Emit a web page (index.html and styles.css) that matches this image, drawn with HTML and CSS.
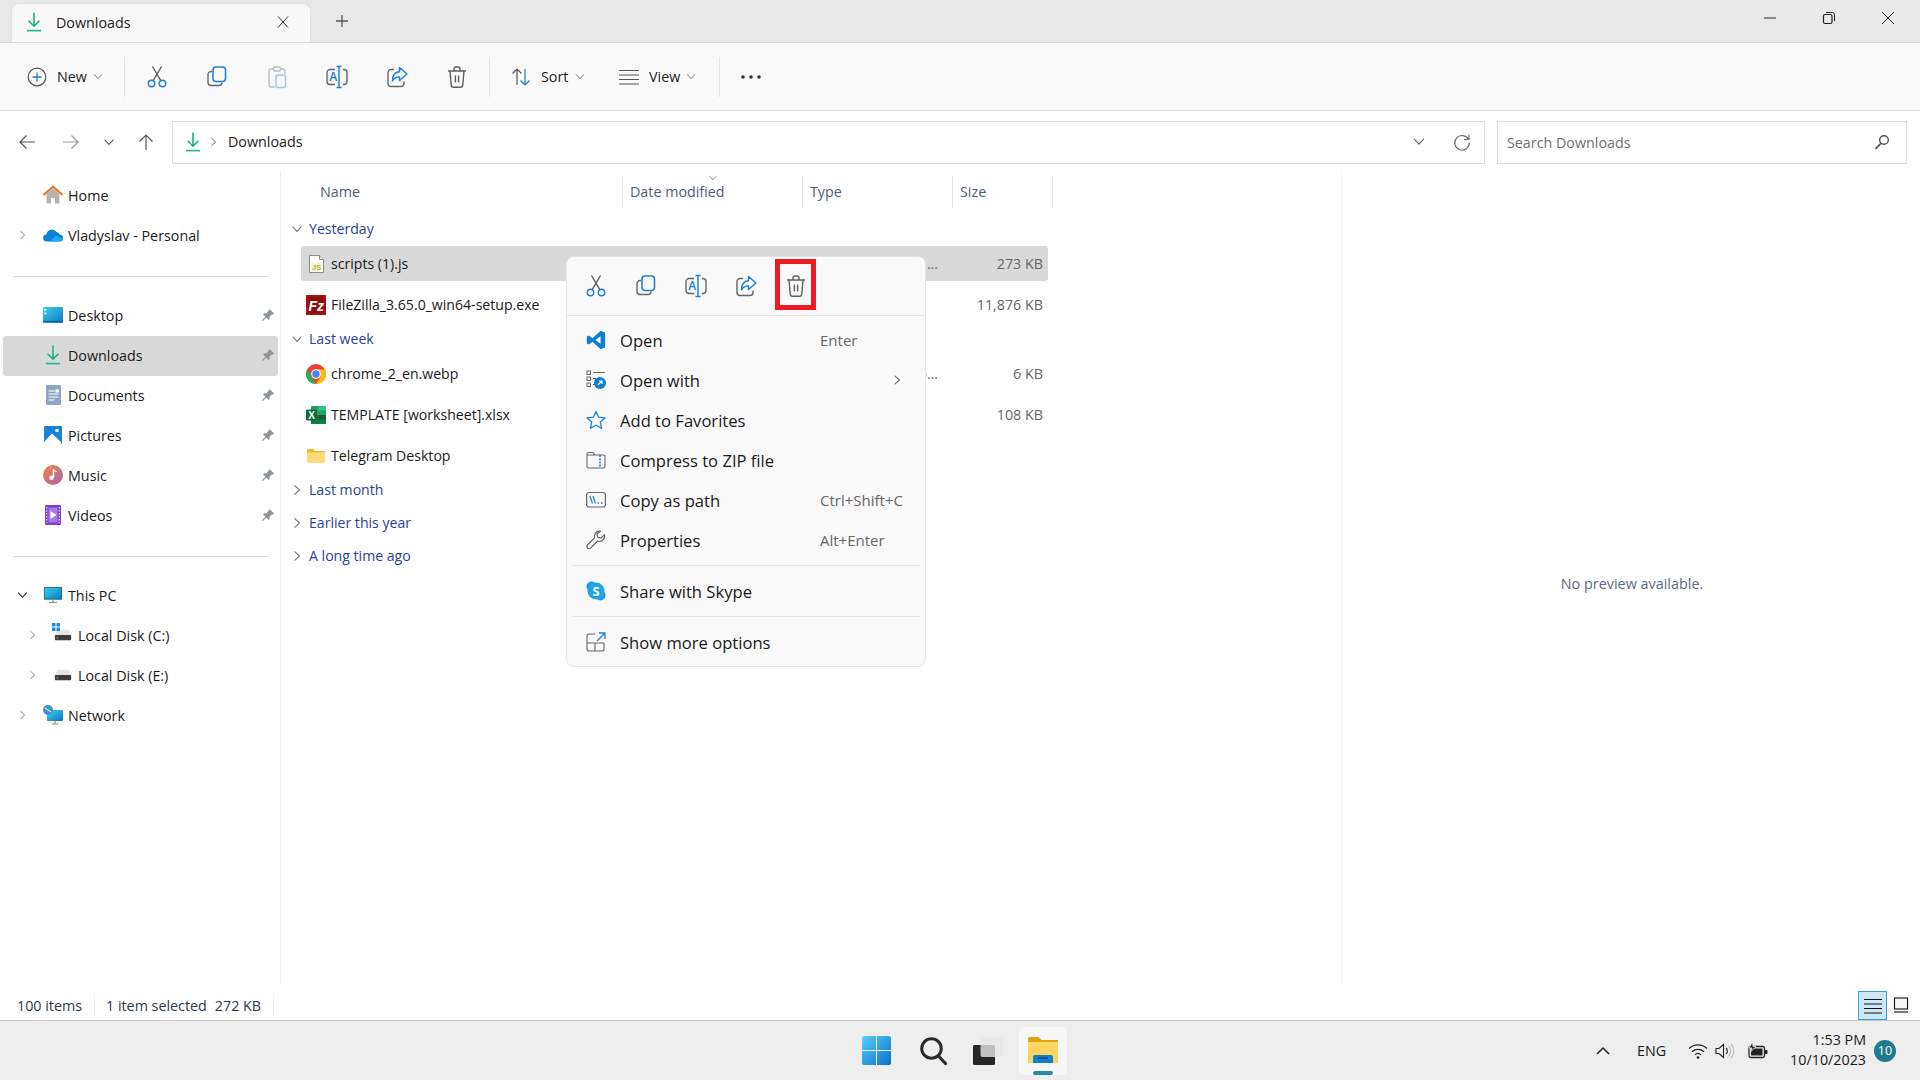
FILE: index.html
```html
<!DOCTYPE html>
<html lang="en">
<head>
    <meta charset="UTF-8">
    <title>Downloads - File Explorer</title>
    <link rel="stylesheet" href="styles.css">
</head>
<body>
    <!-- shared icons -->
    <svg class="sprite" width="0" height="0">
        <defs>
            <linearGradient id="gradSky" x1="0" y1="0" x2="1" y2="1"><stop offset="0" stop-color="#3fd0f0"/><stop offset="1" stop-color="#0b78c2"/></linearGradient>
            <linearGradient id="gradMusic" x1="0" y1="0" x2="1" y2="1"><stop offset="0" stop-color="#f08a3c"/><stop offset="1" stop-color="#a85fb0"/></linearGradient>
            <linearGradient id="gradWin" x1="0" y1="0" x2="1" y2="1"><stop offset="0" stop-color="#5ad0fb"/><stop offset="1" stop-color="#0670cc"/></linearGradient>
            <symbol id="i-dl" viewBox="0 0 14 20"><path d="M7 0.500V14M1.600 8.800L7 14.200l5.400-5.400" fill="none" stroke="#14b37d" stroke-width="1.600"/><path d="M0 18.600h14" stroke="#22b8a0" stroke-width="1.700"/></symbol>
            <symbol id="i-cut" viewBox="0 0 24 24"><path d="M7.500 1.500l8.300 14.200M16.500 1.500L8.200 15.700" fill="none" stroke="#5a5a5a" stroke-width="1.300"/><circle cx="6.500" cy="18.500" r="3.200" fill="none" stroke="#1a7fd8" stroke-width="1.400"/><circle cx="17.500" cy="18.500" r="3.200" fill="none" stroke="#1a7fd8" stroke-width="1.400"/></symbol>
            <symbol id="i-copy" viewBox="0 0 24 24"><path d="M7 6.500H6a3 3 0 0 0-3 3v8a3 3 0 0 0 3 3h8a3 3 0 0 0 3-3" fill="none" stroke="#666" stroke-width="1.400"/><rect x="8" y="2" width="12.500" height="14.500" rx="3" fill="none" stroke="#1a7fd8" stroke-width="1.500"/></symbol>
            <symbol id="i-paste" viewBox="0 0 24 24"><path d="M8 4H6a2 2 0 0 0-2 2v14a2 2 0 0 0 2 2h4M16 4h2a2 2 0 0 1 2 2v3" fill="none" stroke="#666" stroke-width="1.400"/><rect x="8.500" y="2" width="7" height="4" rx="1.500" fill="none" stroke="#666" stroke-width="1.400"/><rect x="11" y="10" width="9.500" height="12.500" rx="2" fill="none" stroke="#1a7fd8" stroke-width="1.400"/></symbol>
            <symbol id="i-rename" viewBox="0 0 24 24"><path d="M10 4.500H5a3 3 0 0 0-3 3v9a3 3 0 0 0 3 3h5M18 4.500h1a3 3 0 0 1 3 3v9a3 3 0 0 1-3 3h-1" fill="none" stroke="#666" stroke-width="1.400"/><path d="M11.500 1.500h5M14 1.500v21M11.500 22.500h5" fill="none" stroke="#1a7fd8" stroke-width="1.400"/><text x="4.200" y="16" class="icon-letter">A</text></symbol>
            <symbol id="i-share" viewBox="0 0 24 24"><path d="M9 4.500H6a3 3 0 0 0-3 3v11a3 3 0 0 0 3 3h10a3 3 0 0 0 3-3v-2" fill="none" stroke="#666" stroke-width="1.400"/><path d="M14.500 2.500l7.500 6.500-7.500 6.500v-3.600c-3.400 0-5.600 1.400-7 4 0-5.400 2.600-9 7-9.200z" fill="none" stroke="#1a7fd8" stroke-width="1.400" stroke-linejoin="round"/></symbol>
            <symbol id="i-trash" viewBox="0 0 24 24"><path d="M3 6h18M9 5.500V4a2 2 0 0 1 2-2h2a2 2 0 0 1 2 2v1.500M5 6l1.200 14a2.400 2.400 0 0 0 2.400 2.200h6.800a2.400 2.400 0 0 0 2.400-2.200L19 6M10.400 10.500v7M13.600 10.500v7" fill="none" stroke="#5f5f5f" stroke-width="1.400"/></symbol>
            <symbol id="i-pin" viewBox="0 0 16 16"><path d="M9.600 1l5.400 5.400-1.500.9-1 0-2.600 2.600-.3 2.800-1 1L5.900 11 1.800 15l-.8-.8L5 10.100 2.300 7.400l1-1 2.800-.3 2.600-2.600 0-1z" fill="#8d9499"/></symbol>
            <symbol id="i-right" viewBox="0 0 10 14"><path d="M2 1.500l6 5.500-6 5.500" fill="none" stroke="currentColor" stroke-width="1.300"/></symbol>
            <symbol id="i-down" viewBox="0 0 14 10"><path d="M1.500 2l5.500 6 5.500-6" fill="none" stroke="currentColor" stroke-width="1.300"/></symbol>
            <symbol id="i-disk" viewBox="0 0 20 14"><path d="M3.500 1h13L19.500 7h-19z" fill="#e4e4e4"/><rect x="0.500" y="7" width="19" height="6" rx="1" fill="#3c3c3c"/><rect x="2.500" y="9.500" width="2" height="1.500" fill="#46d04a"/></symbol>
        </defs>
    </svg>

    <div class="window">
        <!-- tabs -->
        <div class="tabbar">
            <div class="tab">
                <svg class="tab-icon" width="14" height="20"><use href="#i-dl"/></svg>
                <span>Downloads</span>
                <svg class="tab-close" width="14" height="14" viewBox="0 0 14 14"><path d="M2 1.500l10 11M12 1.500l-10 11" stroke="#333" stroke-width="1"/></svg>
            </div>
            <div class="tab-add">
                <svg width="14" height="14" viewBox="0 0 14 14"><path d="M7 1v12M1 7h12" stroke="#555" stroke-width="1.300"/></svg>
            </div>
            <div class="win-controls">
                <div class="win-btn"><svg width="14" height="14" viewBox="0 0 14 14"><path d="M1 7h12" stroke="#222" stroke-width="1"/></svg></div>
                <div class="win-btn"><svg width="14" height="14" viewBox="0 0 14 14"><rect x="1.500" y="3.500" width="8.500" height="9" rx="1.500" fill="none" stroke="#222" stroke-width="1.200"/><path d="M4 1.500h6.500a2 2 0 0 1 2 2V10" fill="none" stroke="#222" stroke-width="1"/></svg></div>
                <div class="win-btn"><svg width="14" height="14" viewBox="0 0 14 14"><path d="M1 1l12 12M13 1L1 13" stroke="#222" stroke-width="1"/></svg></div>
            </div>
        </div>

        <!-- command bar -->
        <div class="toolbar">
            <div class="tool-text tool-new">
                <svg width="20" height="20" viewBox="0 0 20 20"><circle cx="10" cy="10" r="8.800" fill="none" stroke="#555" stroke-width="1.200"/><path d="M10 5.500v9M5.500 10h9" stroke="#1a7fd8" stroke-width="1.300"/></svg>
                <span>New</span>
                <svg class="caret" width="10" height="7"><use href="#i-down"/></svg>
            </div>
            <div class="tool-sep"></div>
            <div class="tool"><svg width="24" height="24"><use href="#i-cut"/></svg></div>
            <div class="tool"><svg width="24" height="24"><use href="#i-copy"/></svg></div>
            <div class="tool disabled"><svg width="24" height="24"><use href="#i-paste"/></svg></div>
            <div class="tool"><svg width="24" height="24"><use href="#i-rename"/></svg></div>
            <div class="tool"><svg width="24" height="24"><use href="#i-share"/></svg></div>
            <div class="tool"><svg width="24" height="24"><use href="#i-trash"/></svg></div>
            <div class="tool-sep"></div>
            <div class="tool-text tool-sort">
                <svg width="20" height="20" viewBox="0 0 20 20"><path d="M6 18V2M1.500 6.500L6 2l4.500 4.500" fill="none" stroke="#555" stroke-width="1.200"/><path d="M14 2v16M9.500 13.500L14 18l4.500-4.500" fill="none" stroke="#1a7fd8" stroke-width="1.200"/></svg>
                <span>Sort</span>
                <svg class="caret" width="10" height="7"><use href="#i-down"/></svg>
            </div>
            <div class="tool-text tool-view">
                <svg width="20" height="20" viewBox="0 0 20 20"><path d="M0 3.500h20M0 8h20M0 12.500h20M0 17h20" stroke="#555" stroke-width="1.200"/></svg>
                <span>View</span>
                <svg class="caret" width="10" height="7"><use href="#i-down"/></svg>
            </div>
            <div class="tool-sep tool-sep-last"></div>
            <div class="tool"><svg width="22" height="6" viewBox="0 0 22 6"><circle cx="3" cy="3" r="1.800" fill="#333"/><circle cx="11" cy="3" r="1.800" fill="#333"/><circle cx="19" cy="3" r="1.800" fill="#333"/></svg></div>
        </div>

        <!-- address row -->
        <div class="address-row">
            <div class="nav-btn nav-w44"><svg width="18" height="18" viewBox="0 0 18 18"><path d="M17 9H2M8.500 2.500L2 9l6.500 6.500" fill="none" stroke="#555" stroke-width="1.200"/></svg></div>
            <div class="nav-btn nav-w44 nav-off"><svg width="18" height="18" viewBox="0 0 18 18"><path d="M1 9h15M9.500 2.500L16 9l-6.500 6.500" fill="none" stroke="#999" stroke-width="1.200"/></svg></div>
            <div class="nav-btn nav-w32"><svg width="12" height="8"><use href="#i-down"/></svg></div>
            <div class="nav-btn nav-w42"><svg width="18" height="18" viewBox="0 0 18 18"><path d="M9 17V2M2.500 8.500L9 2l6.500 6.500" fill="none" stroke="#555" stroke-width="1.200"/></svg></div>
            <div class="address-box">
                <svg width="14" height="20"><use href="#i-dl"/></svg>
                <svg class="crumb-sep" width="7" height="10"><use href="#i-right"/></svg>
                <span>Downloads</span>
                <svg class="address-drop" width="14" height="9"><use href="#i-down"/></svg>
                <svg class="address-refresh" width="18" height="18" viewBox="0 0 18 18"><path d="M15.500 6.500A7.300 7.300 0 1 0 16.300 9.500M16 1.500v5h-5" fill="none" stroke="#666" stroke-width="1.100"/></svg>
            </div>
            <div class="search-box">
                <span>Search Downloads</span>
                <svg width="16" height="16" viewBox="0 0 16 16"><circle cx="10" cy="6" r="4.300" fill="none" stroke="#555" stroke-width="1.400"/><path d="M7 9.300L1.500 14.800" stroke="#555" stroke-width="1.800"/></svg>
            </div>
        </div>

        <div class="main">
            <!-- navigation pane -->
            <nav class="sidebar">
                <div class="nav-row">
                    <span class="chev"></span>
                    <span class="nav-icon"><svg width="20" height="20" viewBox="0 0 20 20"><path d="M3.500 9v9.500h4.500V13h4v5.500h4.500V9L10 3z" fill="#b3b3b3"/><path d="M0.500 10L10 1.500 19.500 10" fill="none" stroke="#e8751a" stroke-width="2"/></svg></span>
                    <span>Home</span>
                </div>
                <div class="nav-row">
                    <span class="chev"><svg width="7" height="10"><use href="#i-right"/></svg></span>
                    <span class="nav-icon"><svg width="20" height="14" viewBox="0 0 20 14"><path d="M4 13.500a3.500 3.500 0 0 1-.6-7A5.500 5.500 0 0 1 13.500 4a4 4 0 0 1 3 2.500 3.500 3.500 0 0 1 0 7z" fill="#0f7fdc"/><path d="M7 13.500L13 7.500l6.500 3a3.500 3.500 0 0 1-3 3z" fill="#27a7ec"/></svg></span>
                    <span>Vladyslav - Personal</span>
                </div>
                <div class="nav-sep"></div>
                <div class="nav-row">
                    <span class="chev"></span>
                    <span class="nav-icon"><svg width="20" height="16" viewBox="0 0 20 16"><rect width="20" height="16" rx="1" fill="url(#gradSky)"/><rect x="1.500" y="2" width="1.800" height="1.800" fill="#fff"/><rect x="1.500" y="5.500" width="1.800" height="1.800" fill="#fff"/><path d="M0 14.500h20" stroke="#0a5f9c" stroke-width="1.200"/></svg></span>
                    <span>Desktop</span>
                    <svg class="pin" width="14" height="14"><use href="#i-pin"/></svg>
                </div>
                <div class="nav-row active">
                    <span class="chev"></span>
                    <span class="nav-icon"><svg width="14" height="20"><use href="#i-dl"/></svg></span>
                    <span>Downloads</span>
                    <svg class="pin" width="14" height="14"><use href="#i-pin"/></svg>
                </div>
                <div class="nav-row">
                    <span class="chev"></span>
                    <span class="nav-icon"><svg width="15" height="20" viewBox="0 0 15 20"><rect width="15" height="20" rx="1" fill="#8ea6c4"/><path d="M2.500 6h6M2.500 9h10M2.500 12h10M2.500 15h6" stroke="#fff" stroke-width="1"/><rect x="9.500" y="4.500" width="3.500" height="3" fill="#fff"/></svg></span>
                    <span>Documents</span>
                    <svg class="pin" width="14" height="14"><use href="#i-pin"/></svg>
                </div>
                <div class="nav-row">
                    <span class="chev"></span>
                    <span class="nav-icon"><svg width="18" height="18" viewBox="0 0 18 18"><rect width="18" height="18" rx="1" fill="#1882d8"/><path d="M0 16L8 7.500l9 8.500v2H0z" fill="#fff"/><circle cx="13" cy="4.500" r="1.800" fill="#fff"/></svg></span>
                    <span>Pictures</span>
                    <svg class="pin" width="14" height="14"><use href="#i-pin"/></svg>
                </div>
                <div class="nav-row">
                    <span class="chev"></span>
                    <span class="nav-icon"><svg width="20" height="20" viewBox="0 0 20 20"><circle cx="10" cy="10" r="10" fill="url(#gradMusic)"/><path d="M10.500 4.500v8" stroke="#fff" stroke-width="1.500"/><path d="M10.500 4.500c1 1.500 2.500 1.500 3 2.500" fill="none" stroke="#fff" stroke-width="1.200"/><circle cx="8.500" cy="12.800" r="2.200" fill="#fff"/></svg></span>
                    <span>Music</span>
                    <svg class="pin" width="14" height="14"><use href="#i-pin"/></svg>
                </div>
                <div class="nav-row">
                    <span class="chev"></span>
                    <span class="nav-icon"><svg width="16" height="20" viewBox="0 0 16 20"><rect width="16" height="20" rx="1" fill="#7b3fd0"/><rect x="3.500" y="2.500" width="9" height="15" fill="#a67ae8"/><path d="M5.500 6l6 4-6 4z" fill="#fff"/><path d="M1.700 2v16M14.300 2v16" stroke="#e6d8fa" stroke-width="1.300" stroke-dasharray="1.500 1.500"/></svg></span>
                    <span>Videos</span>
                    <svg class="pin" width="14" height="14"><use href="#i-pin"/></svg>
                </div>
                <div class="nav-sep"></div>
                <div class="nav-row">
                    <span class="chev chev-dark"><svg width="11" height="8"><use href="#i-down"/></svg></span>
                    <span class="nav-icon"><svg width="18" height="16" viewBox="0 0 18 16"><rect width="18" height="12.500" rx="0.800" fill="url(#gradSky)"/><rect x="0.400" y="0.400" width="17.200" height="11.700" fill="none" stroke="#0a6a8c" stroke-width="0.800"/><path d="M9 12.500V15M5 15.500h8" stroke="#8a8a8a" stroke-width="1.200"/></svg></span>
                    <span>This PC</span>
                </div>
                <div class="nav-row indent">
                    <span class="chev"><svg width="7" height="10"><use href="#i-right"/></svg></span>
                    <span class="nav-icon nav-icon-disk">
                        <svg class="disk-flag" width="8" height="8" viewBox="0 0 8 8"><path d="M0 0h3.500v3.500H0zM4.500 0H8v3.500H4.500zM0 4.500h3.500V8H0zM4.500 4.500H8V8H4.500z" fill="#1a8ae0"/></svg>
                        <svg width="18" height="12"><use href="#i-disk"/></svg>
                    </span>
                    <span>Local Disk (C:)</span>
                </div>
                <div class="nav-row indent">
                    <span class="chev"><svg width="7" height="10"><use href="#i-right"/></svg></span>
                    <span class="nav-icon"><svg width="18" height="12"><use href="#i-disk"/></svg></span>
                    <span>Local Disk (E:)</span>
                </div>
                <div class="nav-row">
                    <span class="chev"><svg width="7" height="10"><use href="#i-right"/></svg></span>
                    <span class="nav-icon"><svg width="20" height="20" viewBox="0 0 20 20"><rect x="4" y="5" width="16" height="11" rx="0.800" fill="url(#gradSky)"/><path d="M12 16v2.500M8.500 19h7" stroke="#8a8a8a" stroke-width="1.200"/><circle cx="5" cy="5" r="5" fill="#3d8fd0"/><path d="M2 3l6 4" stroke="#cfe6f7" stroke-width="1.400"/></svg></span>
                    <span>Network</span>
                </div>
            </nav>

            <!-- file list -->
            <section class="files">
                <div class="columns">
                    <div class="col col-name">Name</div>
                    <div class="col col-date">Date modified<svg class="sort-caret" width="10" height="6"><use href="#i-down"/></svg></div>
                    <div class="col">Type</div>
                    <div class="col">Size</div>
                </div>

                <div class="file-list">
                    <div class="group open">
                        <div class="group-head"><svg width="12" height="8"><use href="#i-down"/></svg><span>Yesterday</span></div>
                        <div class="file-row selected">
                            <span class="file-icon"><svg width="15" height="18" viewBox="0 0 15 18"><path d="M0.500 0.500h10l4 4v13H0.500z" fill="#fff" stroke="#8a8a8a"/><path d="M10.500 0.500v4h4" fill="#eee" stroke="#8a8a8a"/><rect x="2" y="7" width="11" height="9" fill="#f7f7dc"/><text x="3" y="14.500" class="icon-js">JS</text></svg></span>
                            <span>scripts (1).js</span>
                            <span class="file-type">...</span>
                            <span class="file-size">273 KB</span>
                        </div>
                        <div class="file-row">
                            <span class="file-icon"><svg width="20" height="20" viewBox="0 0 20 20"><rect width="20" height="20" fill="#b01010"/><rect x="1.500" y="1.500" width="17" height="17" fill="#8f0d0d"/><text x="2.500" y="15.500" class="icon-fz">Fz</text></svg></span>
                            <span>FileZilla_3.65.0_win64-setup.exe</span>
                            <span class="file-size">11,876 KB</span>
                        </div>
                    </div>
                    <div class="group open">
                        <div class="group-head"><svg width="12" height="8"><use href="#i-down"/></svg><span>Last week</span></div>
                        <div class="file-row">
                            <span class="file-icon"><svg width="20" height="20" viewBox="0 0 20 20"><circle cx="10" cy="10" r="10" fill="#ea4335"/><path d="M1.300 5L10 20a10 10 0 0 1-8.700-15z" fill="#34a853"/><path d="M10 20l4.500-7.500L10 5.500h9a10 10 0 0 1-9 14.500z" fill="#fbbc05"/><circle cx="10" cy="10" r="4.800" fill="#fff"/><circle cx="10" cy="10" r="3.700" fill="#4285f4"/></svg></span>
                            <span>chrome_2_en.webp</span>
                            <span class="file-type">o...</span>
                            <span class="file-size">6 KB</span>
                        </div>
                        <div class="file-row">
                            <span class="file-icon"><svg width="20" height="18" viewBox="0 0 20 18"><rect x="5" width="15" height="18" rx="1" fill="#21a366"/><rect x="12.500" width="7.500" height="4.500" fill="#33c481"/><rect x="5" y="9" width="15" height="9" fill="#107c41"/><rect x="12.500" y="9" width="7.500" height="4.500" fill="#185c37"/><rect y="3.500" width="11" height="11" rx="1" fill="#0e6b38"/><text x="2.300" y="12.500" class="icon-xl">X</text></svg></span>
                            <span>TEMPLATE [worksheet].xlsx</span>
                            <span class="file-size">108 KB</span>
                        </div>
                        <div class="file-row">
                            <span class="file-icon"><svg width="18" height="14" viewBox="0 0 18 14"><path d="M0 1a1 1 0 0 1 1-1h5l2 2h9a1 1 0 0 1 1 1v10a1 1 0 0 1-1 1H1a1 1 0 0 1-1-1z" fill="#f5b921"/><rect y="3.500" width="18" height="10.500" rx="1" fill="#ffdd7a"/></svg></span>
                            <span>Telegram Desktop</span>
                        </div>
                    </div>
                    <div class="group">
                        <div class="group-head"><svg width="8" height="12"><use href="#i-right"/></svg><span>Last month</span></div>
                    </div>
                    <div class="group">
                        <div class="group-head"><svg width="8" height="12"><use href="#i-right"/></svg><span>Earlier this year</span></div>
                    </div>
                    <div class="group">
                        <div class="group-head"><svg width="8" height="12"><use href="#i-right"/></svg><span>A long time ago</span></div>
                    </div>
                </div>
            </section>

            <aside class="preview">No preview available.</aside>
        </div>

        <!-- status bar -->
        <div class="statusbar">
            <span>100 items</span>
            <span class="status-sep"></span>
            <span>1 item selected</span>
            <span class="status-size">272 KB</span>
            <span class="status-sep"></span>
            <div class="view-btn view-btn-on"><svg width="20" height="18" viewBox="0 0 20 18"><path d="M1 2.500h18M1 7h18M1 11.500h18M1 16h18" stroke="#111" stroke-width="1.100"/></svg></div>
            <div class="view-btn"><svg width="16" height="16" viewBox="0 0 16 16"><rect x="1.500" y="1" width="13" height="11" fill="none" stroke="#111" stroke-width="1.100"/><path d="M1 15h14" stroke="#111" stroke-width="1.100"/></svg></div>
        </div>

        <!-- context menu -->
        <div class="menu">
            <div class="menu-tools">
                <div class="menu-tool"><svg width="24" height="24"><use href="#i-cut"/></svg></div>
                <div class="menu-tool"><svg width="24" height="24"><use href="#i-copy"/></svg></div>
                <div class="menu-tool"><svg width="24" height="24"><use href="#i-rename"/></svg></div>
                <div class="menu-tool"><svg width="24" height="24"><use href="#i-share"/></svg></div>
                <div class="menu-tool menu-tool-marked"><svg width="24" height="24"><use href="#i-trash"/></svg></div>
            </div>
            <div class="menu-items">
                <div class="menu-item">
                    <svg width="20" height="20" viewBox="0 0 24 24"><path d="M17.500 1L7.800 10 3.200 6.500 1 7.700v8.600l2.200 1.200 4.600-3.500 9.700 9L23 21V3zM17.500 7.500v9L11.300 12z" fill="#0e7fd0" fill-rule="evenodd"/></svg>
                    <span>Open</span><span class="shortcut">Enter</span>
                </div>
                <div class="menu-item">
                    <svg width="20" height="20" viewBox="0 0 20 20"><path d="M7 2.500h12M7 8.500h3M7 14.500h2" stroke="#666" stroke-width="1"/><rect x="1" y="1" width="3.500" height="3.500" fill="none" stroke="#666"/><rect x="1" y="7" width="3.500" height="3.500" fill="none" stroke="#666"/><rect x="1" y="13" width="3.500" height="3.500" fill="none" stroke="#666"/><circle cx="14" cy="13" r="6" fill="#0f7fd6"/><path d="M11.800 15.200l4-4M13 11h3v3" fill="none" stroke="#fff" stroke-width="1.200"/></svg>
                    <span>Open with</span>
                    <span class="shortcut shortcut-chev"><svg width="8" height="12"><use href="#i-right"/></svg></span>
                </div>
                <div class="menu-item">
                    <svg width="20" height="20" viewBox="0 0 20 20"><path d="M10 1.500l2.600 5.700 6.400.7-4.700 4.200 1.300 6.200L10 15.200l-5.600 3.100 1.300-6.200L1 7.900l6.400-.7z" fill="none" stroke="#1a7fd8" stroke-width="1.300" stroke-linejoin="round"/></svg>
                    <span>Add to Favorites</span>
                </div>
                <div class="menu-item">
                    <svg width="20" height="20" viewBox="0 0 20 20"><path d="M1 5V4a1.500 1.500 0 0 1 1.500-1.500H7L9 5h8.500A1.500 1.500 0 0 1 19 6.500v10a1.500 1.500 0 0 1-1.500 1.500h-15A1.500 1.500 0 0 1 1 16.500V5h8" fill="none" stroke="#666" stroke-width="1.100"/><path d="M14 5v13" stroke="#1a7fd8" stroke-width="1.600" stroke-dasharray="2 1.200"/></svg>
                    <span>Compress to ZIP file</span>
                </div>
                <div class="menu-item">
                    <svg width="20" height="20" viewBox="0 0 20 20"><rect x="0.600" y="2.500" width="18.800" height="14.500" rx="2.500" fill="none" stroke="#666" stroke-width="1.200"/><path d="M4 6l2.500 7.500M7 6l2.500 7.500" stroke="#1a7fd8" stroke-width="1.200"/><path d="M11.500 13h1.500M15 13h1.500" stroke="#1a7fd8" stroke-width="1.400"/></svg>
                    <span>Copy as path</span><span class="shortcut">Ctrl+Shift+C</span>
                </div>
                <div class="menu-item">
                    <svg width="20" height="20" viewBox="0 0 20 20"><path d="M13.500 1.200a5.200 5.200 0 0 0-5 6.700L1.400 15a2.200 2.200 0 0 0 3.100 3.100l7.100-7.100a5.200 5.200 0 0 0 6.800-6.300l-3.400 3.400-3.200-.9-.8-3.200 3.500-2.800z" fill="none" stroke="#666" stroke-width="1.200" stroke-linejoin="round"/></svg>
                    <span>Properties</span><span class="shortcut">Alt+Enter</span>
                </div>
                <div class="menu-sep"></div>
                <div class="menu-item">
                    <svg width="20" height="20" viewBox="0 0 20 20"><circle cx="5.500" cy="5.500" r="5" fill="#1c9ce0"/><circle cx="14.500" cy="14.500" r="5" fill="#1c9ce0"/><circle cx="10" cy="10" r="8.500" fill="#1fa5e8"/><text x="10" y="14.500" class="icon-skype">S</text></svg>
                    <span>Share with Skype</span>
                </div>
                <div class="menu-sep"></div>
                <div class="menu-item">
                    <svg width="20" height="20" viewBox="0 0 20 20"><path d="M9 2H3a2 2 0 0 0-2 2v13a2 2 0 0 0 2 2h13a2 2 0 0 0 2-2v-6H1M9 11v8" fill="none" stroke="#666" stroke-width="1.100"/><path d="M11 9l8-8M13 1h6v6" fill="none" stroke="#1a7fd8" stroke-width="1.300"/></svg>
                    <span>Show more options</span>
                </div>
            </div>
        </div>

        <!-- taskbar -->
        <footer class="taskbar">
            <div></div>
            <div class="task-apps">
                <svg class="task-win" width="29" height="29" viewBox="0 0 29 29"><path d="M0 2a2 2 0 0 1 2-2h12v14H0zM15 0h12a2 2 0 0 1 2 2v12H15zM0 15h14v14H2a2 2 0 0 1-2-2zM15 15h14v12a2 2 0 0 1-2 2H15z" fill="url(#gradWin)"/></svg>
                <svg class="task-search" width="27" height="28" viewBox="0 0 27 28"><circle cx="11.500" cy="11.500" r="9.800" fill="none" stroke="#2b2b2b" stroke-width="3"/><path d="M18.500 19l7 7.500" stroke="#2b2b2b" stroke-width="3.200" stroke-linecap="round"/></svg>
                <svg class="task-view" width="30" height="28" viewBox="0 0 30 28"><rect y="8" width="22" height="20" rx="1.500" fill="#262626"/><rect x="7.500" y="0" width="22.500" height="20" rx="2" fill="#e6e6e6" fill-opacity="0.800"/></svg>
                <div class="task-explorer">
                    <svg width="30" height="26" viewBox="0 0 30 26"><path d="M0 1.500A1.500 1.500 0 0 1 1.500 0h9l3 3H30v23H0z" fill="#e2a50c"/><path d="M0 5h30v21H0z" fill="#ffd561"/><path d="M5 26v-6a2 2 0 0 1 2-2h16a2 2 0 0 1 2 2v6z" fill="#0f7fd0"/><path d="M10 21h10" stroke="#073f72" stroke-width="1.500"/></svg>
                    <span class="task-indicator"></span>
                </div>
            </div>
            <div class="tray">
                <svg class="tray-caret" width="14" height="9" viewBox="0 0 14 9"><path d="M1 8l6-6 6 6" fill="none" stroke="#222" stroke-width="1.500"/></svg>
                <span class="tray-lang">ENG</span>
                <svg class="tray-wifi" width="20" height="16" viewBox="0 0 20 16"><path d="M1 5.500a13 13 0 0 1 18 0M4 8.700a9 9 0 0 1 12 0M7 11.700a4.500 4.500 0 0 1 6 0" fill="none" stroke="#222" stroke-width="1.200"/><circle cx="10" cy="14.500" r="1.300" fill="#222"/></svg>
                <svg class="tray-sound" width="20" height="16" viewBox="0 0 20 16"><path d="M1 5.500h3L8.500 1.500v13L4 10.500H1z" fill="none" stroke="#222" stroke-width="1.100"/><path d="M11 5a4 4 0 0 1 0 6" fill="none" stroke="#222" stroke-width="1.100"/><path d="M13.500 3a7 7 0 0 1 0 10M16 1a10 10 0 0 1 0 14" fill="none" stroke="#bbb" stroke-width="1.100"/></svg>
                <svg class="tray-battery" width="20" height="18" viewBox="0 0 20 18"><rect x="1" y="4.500" width="15.500" height="11" rx="1.800" fill="none" stroke="#222" stroke-width="1.300"/><rect x="3" y="6.500" width="11.500" height="7" fill="#222"/><rect x="17" y="8" width="2.500" height="4" rx="0.800" fill="#222"/><path d="M4.500 0L1 6h3L2.500 10 8 4.500H5z" fill="#222" stroke="#eee" stroke-width="0.800"/></svg>
                <div class="clock"><span>1:53 PM</span><span>10/10/2023</span></div>
                <span class="badge">10</span>
            </div>
        </footer>
    </div>
</body>
</html>
```

FILE: styles.css
```css
* {
    box-sizing: border-box;
}
html, body {
    margin: 0;
    height: 100%;
}
body {
    background: #fff;
    color: #1a1a1a;
    font-family: "Open Sans", "Noto Sans", sans-serif;
    font-size: 14.3px;
    overflow: hidden;
}
svg {
    display: block;
    flex-shrink: 0;
    overflow: visible;
}
.sprite {
    position: absolute;
}
.icon-letter {
    font: 600 12px "Open Sans", sans-serif;
    fill: #1a7fd8;
}
.icon-js {
    font: 700 7.5px "Liberation Sans", sans-serif;
    fill: #b0b52c;
}
.icon-fz {
    font: italic 700 14px "Liberation Sans", sans-serif;
    fill: #fff;
}
.icon-xl {
    font: 700 10px "Liberation Sans", sans-serif;
    fill: #fff;
}
.icon-skype {
    font: 700 13px "Open Sans", sans-serif;
    fill: #fff;
    text-anchor: middle;
}
.window {
    position: relative;
    display: flex;
    flex-direction: column;
    width: 1920px;
    height: 1080px;
}

/* tabs */
.tabbar {
    display: flex;
    flex: 0 0 42px;
    background: #e8e8e8;
    border-bottom: 1px solid #d9d9d9;
}
.tab {
    display: flex;
    align-items: center;
    width: 300px;
    height: 39px;
    margin: 3px 0 0 11px;
    padding: 0 20px 2px 15px;
    background: #f8f8f8;
    border: 1px solid #e2e2e2;
    border-bottom: none;
    border-radius: 8px 8px 0 0;
    color: #222;
}
.tab-icon {
    margin-right: 15px;
}
.tab-close {
    margin-left: auto;
}
.tab-add {
    display: flex;
    align-items: center;
    justify-content: center;
    width: 40px;
    height: 42px;
    margin-left: 11px;
}
.win-controls {
    display: flex;
    margin-left: auto;
    padding-right: 3px;
}
.win-btn {
    display: flex;
    align-items: center;
    justify-content: center;
    width: 59px;
    height: 36px;
}

/* command bar */
.toolbar {
    display: flex;
    align-items: center;
    flex: 0 0 68px;
    padding-left: 17px;
    background: #f9f9f9;
    border-bottom: 1px solid #dcdcdc;
}
.tool {
    display: flex;
    align-items: center;
    justify-content: center;
    width: 60px;
    height: 40px;
}
.tool.disabled {
    opacity: 0.4;
}
.tool-text {
    display: flex;
    align-items: center;
    height: 40px;
    color: #222;
}
.caret {
    margin-left: 6px;
    color: #666;
}
.tool-new {
    width: 105px;
    padding-left: 10px;
    gap: 10px;
}
.tool-new .caret, .tool-view .caret {
    margin-left: -4px;
}
.tool-sort {
    width: 113px;
    padding-left: 19px;
    gap: 10px;
}
.tool-sort .caret {
    margin-left: -3px;
}
.tool-view {
    width: 114px;
    padding-left: 14px;
    gap: 10px;
}
.tool-sep {
    width: 1px;
    height: 40px;
    margin: 0 2px;
    background: #e4e4e4;
}
.tool-sep-last {
    margin: 0 1px 0 0;
}

/* address row */
.address-row {
    display: flex;
    flex: 0 0 60px;
    padding: 10px 13px 7px 5px;
}
.nav-btn {
    display: flex;
    align-items: center;
    justify-content: center;
    padding-bottom: 2px;
    color: #555;
}
.nav-w44 {
    width: 44px;
}
.nav-w32 {
    width: 32px;
}
.nav-w42 {
    width: 42px;
}
.address-box {
    display: flex;
    align-items: center;
    width: 1313px;
    margin-left: 5px;
    padding: 0 13px 2px;
    border: 1px solid #dcdcdc;
    color: #222;
}
.crumb-sep {
    margin: 0 11px 0 10px;
    color: #555;
}
.address-drop {
    margin-left: auto;
    color: #666;
}
.address-refresh {
    margin-left: 27px;
}
.search-box {
    display: flex;
    align-items: center;
    justify-content: space-between;
    width: 410px;
    margin-left: 12px;
    padding: 0 16px 1px 9px;
    border: 1px solid #dcdcdc;
    color: #6f6f6f;
}

/* main area */
.main {
    display: flex;
    flex: 1;
    min-height: 0;
}
.sidebar {
    flex: 0 0 281px;
    padding-top: 5px;
    border-right: 1px solid #f0f0f0;
}
.nav-row {
    display: flex;
    align-items: center;
    height: 40px;
    margin: 0 2px 0 3px;
    padding-bottom: 2px;
    border-radius: 3px;
}
.nav-row.active {
    background: #d9d9d9;
}
.nav-row.indent {
    padding-left: 10px;
}
.chev {
    display: flex;
    justify-content: center;
    flex: 0 0 38px;
    color: #777;
}
.chev-dark {
    color: #222;
}
.nav-icon {
    position: relative;
    display: flex;
    align-items: center;
    justify-content: center;
    flex: 0 0 24px;
    margin-right: 3px;
}
.disk-flag {
    position: absolute;
    top: -6px;
    left: 1px;
}
.pin {
    margin-left: auto;
    margin-right: 3px;
}
.nav-sep {
    width: 255px;
    height: 1px;
    margin: 20px 0 19px 13px;
    background: #d9d9d9;
}

/* file list */
.files {
    flex: 0 0 1061px;
    border-right: 1px solid #f6f6f6;
}
.columns {
    display: grid;
    grid-template-columns: 322px 180px 150px 100px;
    height: 32px;
    margin: 5px 0 0 20px;
    color: #4c607a;
}
.col {
    position: relative;
    display: flex;
    align-items: center;
    padding: 0 0 2px 7px;
    border-right: 1px solid #e5e5e5;
}
.col-name {
    padding-left: 19px;
}
.sort-caret {
    position: absolute;
    top: -1px;
    left: 85px;
    color: #777;
}
.file-list {
    width: 767px;
    margin-top: 5px;
    padding-left: 20px;
}
.group.open {
    margin-bottom: 1px;
}
.group-head {
    display: flex;
    align-items: center;
    gap: 6px;
    height: 33px;
    margin-left: -10px;
    padding-bottom: 2px;
    color: #2a3f9a;
    font-size: 14.1px;
}
.group-head svg {
    width: 12px;
    color: #777;
}
.file-row {
    display: flex;
    align-items: center;
    height: 35px;
    padding: 0 5px;
    border-radius: 3px;
    font-size: 14.1px;
}
.file-row + .file-row {
    margin-top: 6px;
}
.file-row.selected {
    background: #d9d9d9;
}
.file-icon {
    display: flex;
    align-items: center;
    justify-content: center;
    flex: 0 0 20px;
    margin-right: 5px;
}
.file-type {
    margin-left: auto;
    margin-right: 5px;
    color: #666;
}
.file-size {
    width: 100px;
    margin-left: auto;
    color: #666;
    font-size: 14.3px;
    text-align: right;
}
.file-type + .file-size {
    margin-left: 0;
}
.preview {
    flex: 1;
    padding: 403px 0 0 2px;
    color: #5f6b7a;
    font-size: 14.4px;
    text-align: center;
}

/* status bar */
.statusbar {
    display: flex;
    align-items: center;
    flex: 0 0 35px;
    padding: 5px 9px 0 17px;
    color: #2b3a4e;
}
.status-sep {
    width: 1px;
    height: 25px;
    margin: 0 11px 0 12px;
    background: #f0f0f0;
}
.status-size {
    margin-left: 8px;
}
.view-btn {
    display: flex;
    align-items: center;
    justify-content: center;
    width: 20px;
    height: 20px;
    margin-left: 4px;
    background: #f7f7f7;
}
.view-btn-on {
    align-self: flex-end;
    width: 29px;
    height: 29px;
    margin-left: auto;
    background: #cce8f6;
    border: 1px solid #3aa0d8;
}

/* context menu */
.menu {
    position: absolute;
    top: 256px;
    left: 566px;
    width: 360px;
    height: 411px;
    background: #f9f9f9;
    border: 1px solid #e5e5e5;
    border-radius: 8px;
    font-size: 16.6px;
}
.menu-tools {
    display: flex;
    height: 59px;
    padding-left: 4px;
    border-bottom: 1px solid #e5e5e5;
}
.menu-tool {
    position: relative;
    display: flex;
    align-items: center;
    justify-content: center;
    width: 50px;
}
.menu-tool-marked::after {
    content: "";
    position: absolute;
    top: 2px;
    left: 4px;
    box-sizing: border-box;
    width: 41px;
    height: 51px;
    border: 5px solid #ed1c24;
}
.menu-items {
    padding-top: 5px;
}
.menu-item {
    display: grid;
    grid-template-columns: 20px 1fr 105px;
    align-items: center;
    gap: 14px;
    height: 40px;
    padding: 0 0 2px 19px;
}
.shortcut {
    color: #666;
    font-size: 15px;
}
.shortcut-chev {
    padding-left: 73px;
    color: #666;
}
.menu-sep {
    height: 1px;
    margin: 4px 5px 6px;
    background: #e5e5e5;
}

/* taskbar */
.taskbar {
    display: grid;
    grid-template-columns: 850px 220px 1fr;
    align-items: center;
    flex: 0 0 60px;
    background: #eee;
    border-top: 1px solid #c4c4c4;
}
.task-apps {
    display: flex;
    align-items: center;
    padding-left: 12px;
}
.task-search {
    margin-left: 29px;
}
.task-view {
    margin-left: 26px;
}
.task-explorer {
    position: relative;
    display: flex;
    align-items: center;
    justify-content: center;
    width: 48px;
    height: 48px;
    margin-left: 16px;
    padding-bottom: 2px;
    background: #f7f7f7;
    border-radius: 5px;
}
.task-indicator {
    position: absolute;
    bottom: 0;
    left: 14px;
    width: 20px;
    height: 4px;
    background: #2a8a9e;
    border-radius: 2px;
}
.tray {
    display: flex;
    align-items: center;
    padding: 0 24px 0 526px;
}
.tray-lang {
    width: 28px;
    margin-left: 27px;
    white-space: nowrap;
}
.tray-wifi {
    margin-left: 23px;
}
.tray-sound {
    margin-left: 7px;
}
.tray-battery {
    margin-left: 13px;
}
.clock {
    display: flex;
    flex-direction: column;
    align-items: flex-end;
    margin-left: auto;
    padding-bottom: 2px;
    line-height: 20px;
}
.badge {
    display: flex;
    align-items: center;
    justify-content: center;
    width: 22px;
    height: 22px;
    margin-left: 8px;
    background: #1f7a8c;
    border-radius: 50%;
    color: #fff;
    font-size: 12.5px;
}
```
